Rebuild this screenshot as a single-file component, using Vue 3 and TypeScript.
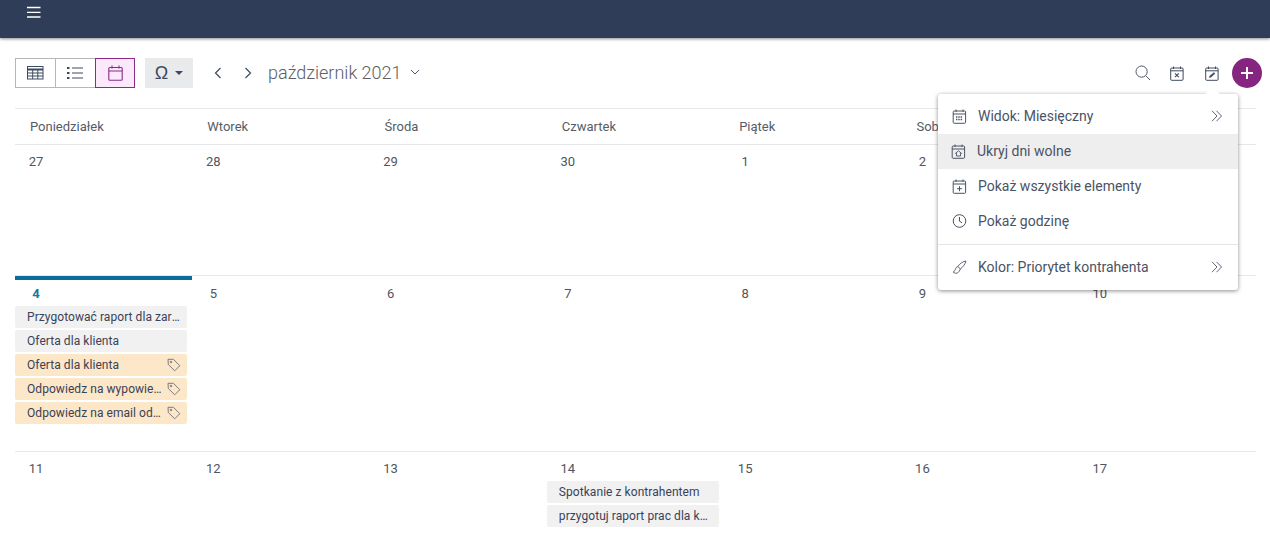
<script setup lang="ts">
interface Chip { text: string; tag?: boolean; }
interface Day { n: number; today?: boolean; chips?: Chip[]; }
const headers = ['Poniedziałek', 'Wtorek', 'Środa', 'Czwartek', 'Piątek', 'Sobota', 'Niedziela'];
const mk = (a: number[]): Day[] => a.map((n) => ({ n }));
const weeks: { h: string; days: Day[] }[] = [
  { h: 'w1', days: mk([27, 28, 29, 30, 1, 2, 3]) },
  {
    h: 'w2',
    days: [
      {
        n: 4,
        today: true,
        chips: [
          { text: 'Przygotować raport dla zarządu' },
          { text: 'Oferta dla klienta' },
          { text: 'Oferta dla klienta', tag: true },
          { text: 'Odpowiedz na wypowiedź klienta', tag: true },
          { text: 'Odpowiedz na email od klienta', tag: true },
        ],
      },
      ...mk([5, 6, 7, 8, 9, 10]),
    ],
  },
  {
    h: 'w3',
    days: [
      ...mk([11, 12, 13]),
      {
        n: 14,
        chips: [{ text: 'Spotkanie z kontrahentem' }, { text: 'przygotuj raport prac dla kontrahenta' }],
      },
      ...mk([15, 16, 17]),
    ],
  },
];
</script>

<template>
  <div class="page">
    <header class="topbar">
      <svg class="burger" width="14" height="13" viewBox="0 0 14 13"><path d="M0 1.500h13.500M0 6.300h13.500M0 11h13.500" stroke="#fff" stroke-width="1.300" fill="none" /></svg>
    </header>

    <div class="toolbar">
      <div class="views">
        <button class="vbtn">
          <svg width="17" height="14" viewBox="0 0 17 14" fill="none" stroke="#3f4a5f"><rect x=".5" y=".5" width="15.500" height="12.500" /><path d="M.5 3.500h15.500" stroke-width="2" /><path d="M.5 7h15.500M.5 10h15.500M5.700 3.500V13M10.800 3.500V13" /></svg>
        </button>
        <button class="vbtn mid">
          <svg width="17" height="14" viewBox="0 0 17 14" fill="none" stroke="#3f4a5f"><path d="M0 2h2.500M0 7h2.500M0 12h2.500" stroke-width="2" /><path d="M5 2h11M5 7h11M5 12h11" stroke-width="1.100" /></svg>
        </button>
        <button class="vbtn active">
          <svg width="15" height="16" viewBox="0 0 15 16" fill="none" stroke="#8b2a8b" stroke-width="1.100"><rect x=".8" y="2.500" width="13.400" height="12.700" rx="1" /><path d="M.8 6h13.400M4 .5v3M11 .5v3" /></svg>
        </button>
      </div>
      <button class="omega"><span class="om">Ω</span><span class="caret"></span></button>
      <div class="nav">
        <svg width="8" height="12" viewBox="0 0 8 12" fill="none" stroke="#3f4a5f" stroke-width="1.200"><path d="M6.500 1 1.500 6l5 5" /></svg>
        <svg width="8" height="12" viewBox="0 0 8 12" fill="none" stroke="#3f4a5f" stroke-width="1.200"><path d="M1.500 1l5 5-5 5" /></svg>
      </div>
      <div class="title">październik 2021</div>
      <svg class="chev" width="10" height="6" viewBox="0 0 10 6" fill="none" stroke="#4a5568" stroke-width="1"><path d="M1 1l4 4 4-4" /></svg>
      <div class="spacer"></div>
      <div class="tools">
        <svg class="search" width="16" height="16" viewBox="0 0 16 16" fill="none" stroke="#4f5868" stroke-width="1"><circle cx="6.600" cy="6.600" r="5.600" /><path d="M10.800 10.800 15 15" /></svg>
        <svg width="14" height="15" viewBox="0 0 14 15" fill="none" stroke="#3f4a5f" stroke-width="1"><rect x=".7" y="2" width="12.400" height="12.300" rx="1" /><path d="M.7 4.800h12.400M3.500.5V3M10.500.5V3" /><path d="M5 7.300l3.800 3.900M8.800 7.300 5 11.200" stroke-width="1.100" /></svg>
        <svg class="edit" width="14" height="15" viewBox="0 0 14 15" fill="none" stroke="#3f4a5f" stroke-width="1"><rect x=".7" y="2" width="12.400" height="12.300" rx="1" /><path d="M.7 4.800h12.400M3.500.5V3M10.500.5V3" /><path d="M4.300 11.600l.4-1.700L9 6.500l1 1.100-4 3.600z" fill="#3f4a5f" stroke-width=".4" /></svg>
        <button class="add">
          <svg width="14" height="14" viewBox="0 0 14 14"><path d="M7 1v12M1 7h12" stroke="#fff" stroke-width="1.900" /></svg>
        </button>
      </div>
    </div>

    <div class="calendar">
      <div class="heads">
        <div v-for="h in headers" :key="h" class="head">{{ h }}</div>
      </div>
      <div v-for="w in weeks" :key="w.h" class="week" :class="w.h">
        <div v-for="d in w.days" :key="d.n" class="cell" :class="{ today: d.today }">
          <div class="num">{{ d.n }}</div>
          <div v-for="c in d.chips" :key="c.text + c.tag" class="chip" :class="{ orange: c.tag }">
            <span class="chip-text">{{ c.text }}</span>
            <svg v-if="c.tag" class="tag" width="14" height="14" viewBox="0 0 14 14" fill="none" stroke="#6b6f78" stroke-width=".9"><path d="M1 1.300h5.400l6.400 6.400-5.100 5.100L1.300 6.500z" stroke-linejoin="round" /><circle cx="4" cy="4" r=".8" /></svg>
          </div>
        </div>
      </div>
    </div>

    <div class="menu">
      <span class="arrow"></span>
      <div class="item">
        <svg class="ic" width="14" height="15" viewBox="0 0 14 15" fill="none" stroke="#4a5365" stroke-width="1"><rect x=".7" y="2" width="12.400" height="12.300" rx="1" /><path d="M.7 5h12.400M3.500.5V3M10.500.5V3" /><path d="M3.500 8h7M3.500 10.500h7" stroke-width="1.400" stroke-dasharray="1.400 .9" /></svg>
        <span class="lbl">Widok: Miesięczny</span>
        <svg class="more" width="12" height="12" viewBox="0 0 12 12" fill="none" stroke="#5f6776" stroke-width="1"><path d="M1 .8 6 6l-5 5.200M5.500.8 10.500 6l-5 5.200" /></svg>
      </div>
      <div class="item hover">
        <svg class="ic shift" width="14" height="15" viewBox="0 0 14 15" fill="none" stroke="#4a5365" stroke-width="1"><rect x=".7" y="2" width="12.400" height="12.300" rx="1" /><path d="M.7 5h12.400M3.500.5V3M10.500.5V3" /><path d="M7 6.800 4 9.400h1V12h4V9.400h1z" stroke-width=".9" /></svg>
        <span class="lbl">Ukryj dni wolne</span>
      </div>
      <div class="item">
        <svg class="ic" width="14" height="15" viewBox="0 0 14 15" fill="none" stroke="#4a5365" stroke-width="1"><rect x=".7" y="2" width="12.400" height="12.300" rx="1" /><path d="M.7 5h12.400M3.500.5V3M10.500.5V3" /><path d="M7 7.200v5M4.500 9.700h5" /></svg>
        <span class="lbl">Pokaż wszystkie elementy</span>
      </div>
      <div class="item">
        <svg class="ic" width="14" height="14" viewBox="0 0 14 14" fill="none" stroke="#4a5365" stroke-width="1"><circle cx="7" cy="7" r="6.300" /><path d="M7 3v4.200l2.600 1.600" /></svg>
        <span class="lbl">Pokaż godzinę</span>
      </div>
      <div class="sep"></div>
      <div class="item">
        <svg class="ic" width="15" height="15" viewBox="0 0 15 15" fill="none" stroke="#4a5365" stroke-width=".9"><path d="M14 1c-3 .4-6.500 2.700-8.200 5.600l2.600 2.300C11 7 13.300 4 14 1z" /><path d="M5.800 6.600C3.500 7 3.600 9.500 2.700 10.800c-.4.600-1.200 1-1.700 1.100 1.300 1.600 4.500 2 6-.3.800-1.100.9-2 1.400-2.700" /></svg>
        <span class="lbl">Kolor: Priorytet kontrahenta</span>
        <svg class="more" width="12" height="12" viewBox="0 0 12 12" fill="none" stroke="#5f6776" stroke-width="1"><path d="M1 .8 6 6l-5 5.200M5.500.8 10.500 6l-5 5.200" /></svg>
      </div>
    </div>
  </div>
</template>

<style>
html, body { margin: 0; background: #fff; overflow: hidden; }
</style>

<style scoped>
.page { position: relative; width: 1270px; height: 535px; overflow: hidden; font-family: Roboto, "Liberation Sans", sans-serif; color: #3f4a5f; background: #fff; }
.topbar { height: 38px; background: #2f3d58; box-shadow: 0 1px 3px rgba(0,0,0,.45); position: relative; }
.burger { position: absolute; left: 27px; top: 6px; }
.toolbar { display: flex; align-items: center; height: 30px; margin-top: 20px; padding-left: 15px; padding-right: 8px; }
button { padding: 0; margin: 0; background: none; border: 0; display: flex; align-items: center; justify-content: center; }
.views { display: flex; }
.vbtn { width: 41px; height: 30px; border: 1px solid #b4b7bb; box-sizing: border-box; }
.vbtn.mid { margin-left: -1px; }
.vbtn.active { width: 40px; margin-left: -1px; border-color: #8b2a8b; background: #fbe9fb; }
.omega { width: 48px; height: 30px; margin-left: 10px; background: #e9eaec; gap: 7px; }
.om { font-size: 18px; line-height: 20px; color: #3f4a5f; font-family: "Liberation Sans", sans-serif; }
.caret { width: 0; height: 0; border-left: 4px solid transparent; border-right: 4px solid transparent; border-top: 4px solid #3f4a5f; }
.nav { display: flex; gap: 22px; margin-left: 21px; }
.title { margin-left: 16px; padding-bottom: 2px; font-size: 18px; font-weight: 300; color: #5c6066; }
.chev { margin-left: 8px; margin-bottom: 2px; }
.spacer { flex: 1; }
.tools { display: flex; align-items: center; gap: 20px; }
.search { margin-right: -1px; }
.edit { margin-left: 1px; }
.add { width: 30px; height: 30px; border-radius: 50%; background: #86257f; margin-left: -7px; }
.calendar { margin: 20px 14px 0 15px; }
.heads { display: grid; grid-template-columns: repeat(7, 1fr); border-top: 1px solid #e6e7e9; border-bottom: 1px solid #e6e7e9; box-sizing: border-box; height: 37px; }
.head { font-size: 13px; color: #555c68; padding-left: 15px; line-height: 36px; }
.week { display: grid; grid-template-columns: repeat(7, 1fr); border-bottom: 1px solid #e6e7e9; box-sizing: border-box; }
.w1 { height: 131px; }
.w2 { height: 176px; }
.w3 { border-bottom: 0; height: 90px; }
.cell { padding-top: 9px; min-width: 0; box-sizing: border-box; }
.w2 .cell { padding-top: 10px; }
.num { width: 42px; text-align: center; font-size: 13px; line-height: 15px; color: #4f5561; height: 15px; margin-bottom: 5px; }
.w2 .today { border-top: 4px solid #0a6e9c; padding-top: 6px; }
.today .num { font-weight: 700; color: #0b7ba3; }
.chip { display: flex; align-items: center; width: 172px; height: 22px; margin-bottom: 2px; padding: 0 6px 0 12px; box-sizing: border-box; border-radius: 2px; background: #f1f1f2; font-size: 12px; letter-spacing: .06px; color: #3a4256; }
.orange { background: #fde7c9; }
.chip-text { flex: 1; min-width: 0; white-space: nowrap; overflow: hidden; text-overflow: ellipsis; }
.tag { margin-left: 5px; flex: none; }
.menu { position: absolute; left: 938px; top: 94px; width: 300px; height: 196px; padding-top: 5px; box-sizing: border-box; background: #fff; border-radius: 3px; box-shadow: 0 1px 4px rgba(0,0,0,.45); }
.arrow { position: absolute; left: 269px; top: -5px; width: 11px; height: 11px; background: #fff; transform: rotate(45deg); }
.item { position: relative; display: flex; align-items: center; height: 35px; padding: 0 15px 1px 14px; box-sizing: border-box; font-size: 14px; color: #4a5365; }
.hover { background: #eeeeee; }
.ic { flex: none; width: 15px; margin-right: 11px; }
.shift { margin-left: -1px; }
.lbl { flex: 1; white-space: nowrap; }
.sep { height: 1px; background: #e4e5e7; margin: 5px 0 5px; }
</style>
